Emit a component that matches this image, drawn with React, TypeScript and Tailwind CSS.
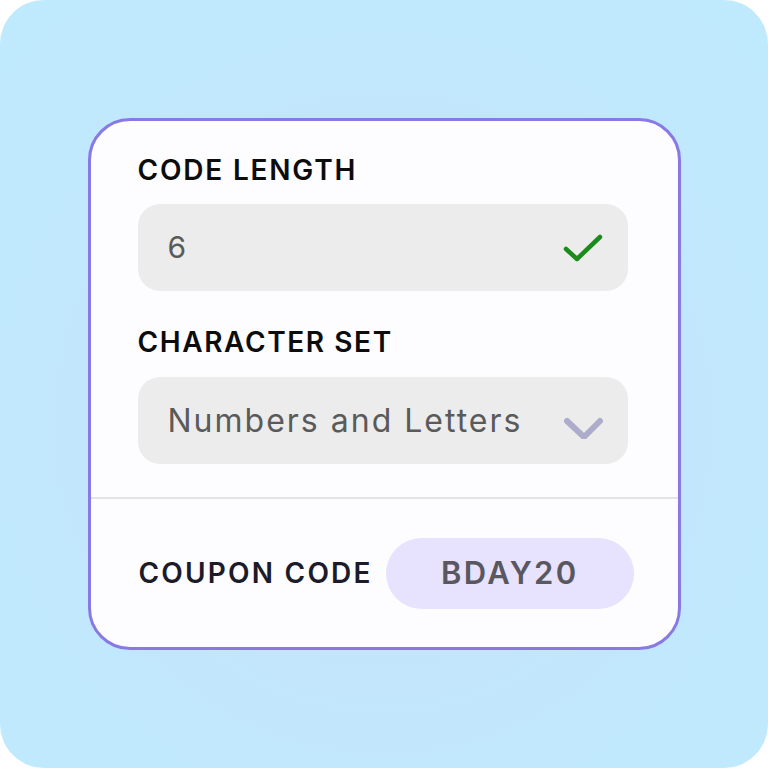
import React from "react";

export default function App() {
  return (
    <div className="w-[768px] h-[768px] bg-white" style={{ fontFamily: "Inter, 'Noto Sans', sans-serif" }}>
      <div className="w-full h-full rounded-[44px] bg-[radial-gradient(circle_at_50%_55%,#c6e0fb_0%,#c1e8fd_65%,#bfeafd_100%)] flex items-center justify-center">
        <div className="w-[593px] h-[532px] rounded-[42px] border-[3px] border-[#8979e4] bg-[#fdfdff] flex flex-col overflow-hidden">
          <div className="pt-[34px] pl-[47px] pr-[50px] pb-[33px] flex flex-col">
            <div className="h-[30px] leading-[30px] text-[28px] font-semibold text-[#0c0c0c] tracking-[1.8px]">CODE LENGTH</div>
            <div className="mt-[19px] h-[87px] rounded-[22px] bg-[#ececec] flex items-center justify-between pl-[30px] pr-[24px]">
              <span className="text-[30px] text-[#5a5a5a]">6</span>
              <svg width="42" height="28" viewBox="0 0 42 28" fill="none">
                <polyline points="4,15 15,25 38,3" stroke="#1b8c1b" strokeWidth="4.5" strokeLinecap="round" strokeLinejoin="round" />
              </svg>
            </div>
            <div className="mt-[36px] h-[30px] leading-[30px] text-[28px] font-semibold text-[#0c0c0c] tracking-[1.6px]">CHARACTER SET</div>
            <div className="mt-[20px] h-[87px] rounded-[22px] bg-[#ececec] flex items-center justify-between pl-[30px] pr-[24px]">
              <span className="text-[32px] text-[#5a5a5a] tracking-[2px]">Numbers and Letters</span>
              <svg width="42" height="28" viewBox="0 0 42 28" fill="none" className="mt-[8px]">
                <polyline points="5,10 22,26 38,10" stroke="#adacca" strokeWidth="6" strokeLinecap="round" strokeLinejoin="round" />
              </svg>
            </div>
          </div>
          <div className="h-[2px] bg-[#e2e2e7]" />
          <div className="flex-1 flex items-center pl-[48px]">
            <span className="text-[28px] font-semibold text-[#1b1b29] tracking-[2.2px]">COUPON CODE</span>
            <div className="ml-[13px] w-[248px] h-[71px] rounded-full bg-[#e7e2fd] flex items-center justify-center">
              <span className="text-[31px] font-semibold text-[#59575f] tracking-[2.3px]">BDAY20</span>
            </div>
          </div>
        </div>
      </div>
    </div>
  );
}
